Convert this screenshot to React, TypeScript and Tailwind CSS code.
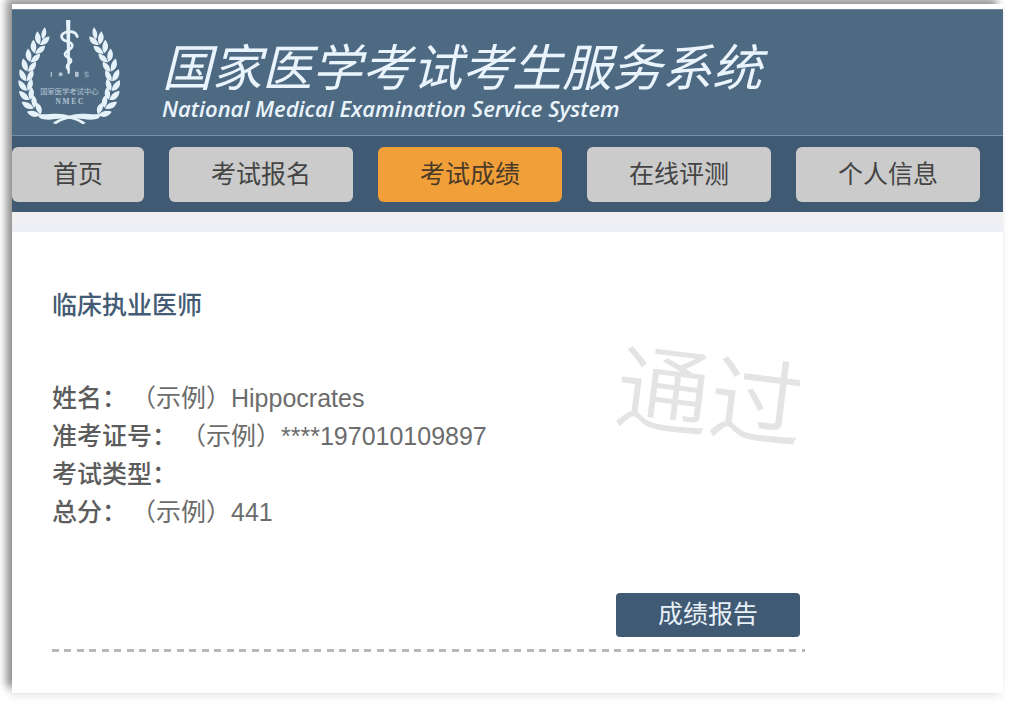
import clsx from 'clsx';

interface NavItem {
  label: string;
  active?: boolean;
}

interface ResultField {
  label: string;
  value?: string;
}

const navItems: NavItem[] = [
  { label: '首页' },
  { label: '考试报名' },
  { label: '考试成绩', active: true },
  { label: '在线评测' },
  { label: '个人信息' },
];

const fields: ResultField[] = [
  { label: '姓名：', value: '（示例）Hippocrates' },
  { label: '准考证号：', value: '（示例）****197010109897' },
  { label: '考试类型：' },
  { label: '总分：', value: '（示例）441' },
];

// x, y and rotation of every leaf pair on the left branch
const leaves = [
  [122, 120, 22],
  [108, 146, 26],
  [94, 172, 22],
  [84, 200, 12],
  [79, 229, 2],
  [79, 258, -8],
  [84, 286, -18],
  [95, 312, -32],
  [112, 334, -46],
];

function Branch() {
  return (
    <g>
      <path d="M134 78 C142 90 139 106 128 114 C120 102 125 88 134 78Z" />
      {leaves.map(([x, y, angle]) => (
        <g key={y} transform={`translate(${x} ${y}) rotate(${angle})`}>
          <path d="M0 11 C-18 8 -25 -6 -21 -24 C-7 -18 1 -6 0 11Z" />
          <path d="M2 11 C0 -5 6 -17 19 -23 C25 -7 18 7 2 11Z" />
        </g>
      ))}
      <path d="M112 338 C130 344 170 334 190 340 C210 344 238 352 258 366 L248 370 C232 359 212 351 188 352 C160 355 134 360 118 350Z" />
    </g>
  );
}

function Logo() {
  return (
    <svg viewBox="54 50 306 322" className="h-[107px] w-[102px] shrink-0 fill-[#e6f2fa]" aria-hidden="true">
      <Branch />
      <g transform="matrix(-1 0 0 1 416 0)">
        <Branch />
      </g>
      <path d="M198 56 H211 L209 218 L203 218Z" />
      <path
        d="M232 106 C228 90 208 88 194 94 C178 102 184 116 200 120 C218 124 222 134 210 144 C194 152 190 160 202 168 C216 174 216 182 206 188 C198 193 200 200 206 206"
        fill="none"
        stroke="#e6f2fa"
        strokeWidth="8"
        strokeLinecap="round"
      />
      <g opacity="0.65">
        <rect x="152" y="212" width="4" height="15" />
        <circle cx="182" cy="219" r="6" />
        <rect x="225" y="212" width="11" height="15" />
        <path d="M254 212h12v4h-8v3h8v9h-12v-3h8v-3h-8z" opacity="0.6" />
      </g>
      <g opacity="0.65" textAnchor="middle">
        <text x="208" y="280" className="font-['Noto_Sans_CJK_SC',sans-serif] text-[22px]">
          国家医学考试中心
        </text>
        <text x="208" y="310" className="font-['Liberation_Serif',serif] text-[22px] font-bold">
          N M E C
        </text>
      </g>
    </svg>
  );
}

export default function App() {
  return (
    <div className="min-h-screen bg-white pt-1 pr-[11px] pb-4 pl-3 font-['Liberation_Sans','Noto_Sans_CJK_SC',sans-serif] text-[25px]">
      <div className="bg-white pt-[5px] shadow-[-6px_-6px_8px_rgba(0,0,0,0.4),-2px_4px_8px_rgba(0,0,0,0.08)]">
        <header className="flex h-[127px] items-start border-t border-b border-t-[#70859a] border-b-[#7890a6] bg-[#4e6a83] pt-2 pl-1.5">
          <Logo />
          <div className="ml-[42px] pt-[26px] text-[#eaf4fc] italic">
            <h1 className="text-[50px] leading-[50px] whitespace-nowrap">国家医学考试考生服务系统</h1>
            <p className="font-['Open_Sans',sans-serif] text-[22px] leading-7 font-semibold whitespace-nowrap">
              National Medical Examination Service System
            </p>
          </div>
        </header>

        <nav className="flex gap-[25px] bg-[#415a73] pt-[11px] pb-2.5">
          {navItems.map((item, i) => (
            <button
              key={item.label}
              type="button"
              className={clsx(
                'h-[55px] shrink-0 rounded-md',
                i === 0 ? 'w-[132px]' : 'w-[184px]',
                item.active ? 'bg-[#f19f38] text-[#4a3a28]' : 'bg-[#cbcbcb] text-[#444]'
              )}
            >
              {item.label}
            </button>
          ))}
        </nav>

        <div className="h-5 bg-linear-to-b from-[#f1f0f0] to-[#edeff6]" />

        <main className="px-10 pt-[54px] pb-[41px]">
          <div className="relative max-w-[753px]">
            <h2 className="leading-[38px] font-medium text-[#445b74]">临床执业医师</h2>

            <dl className="mt-[55px] leading-[38px] text-[#6c6c6c]">
              {fields.map((field) => (
                <div key={field.label} className="flex">
                  <dt className="font-medium text-[#5c5c5c]">{field.label}</dt>
                  <dd className="ml-1">{field.value}</dd>
                </div>
              ))}
            </dl>

            <div className="mt-[62px] flex justify-end pr-[5px]">
              <button type="button" className="h-11 w-[184px] rounded-sm bg-[#415a73] text-[#e8f0f8]">
                成绩报告
              </button>
            </div>

            <hr className="mt-3 h-[3px] border-0 bg-[repeating-linear-gradient(90deg,#b9b5b9_0_7px,transparent_7px_12px,#b9b5b9_12px_19px,transparent_19px_25px)]" />

            <div className="pointer-events-none absolute top-[54px] right-0 rotate-7 font-['Noto_Sans_CJK_SC',sans-serif] text-[94px] leading-[100px] font-[350] text-[#e4e4e4] select-none">
              通过
            </div>
          </div>
        </main>
      </div>
    </div>
  );
}
